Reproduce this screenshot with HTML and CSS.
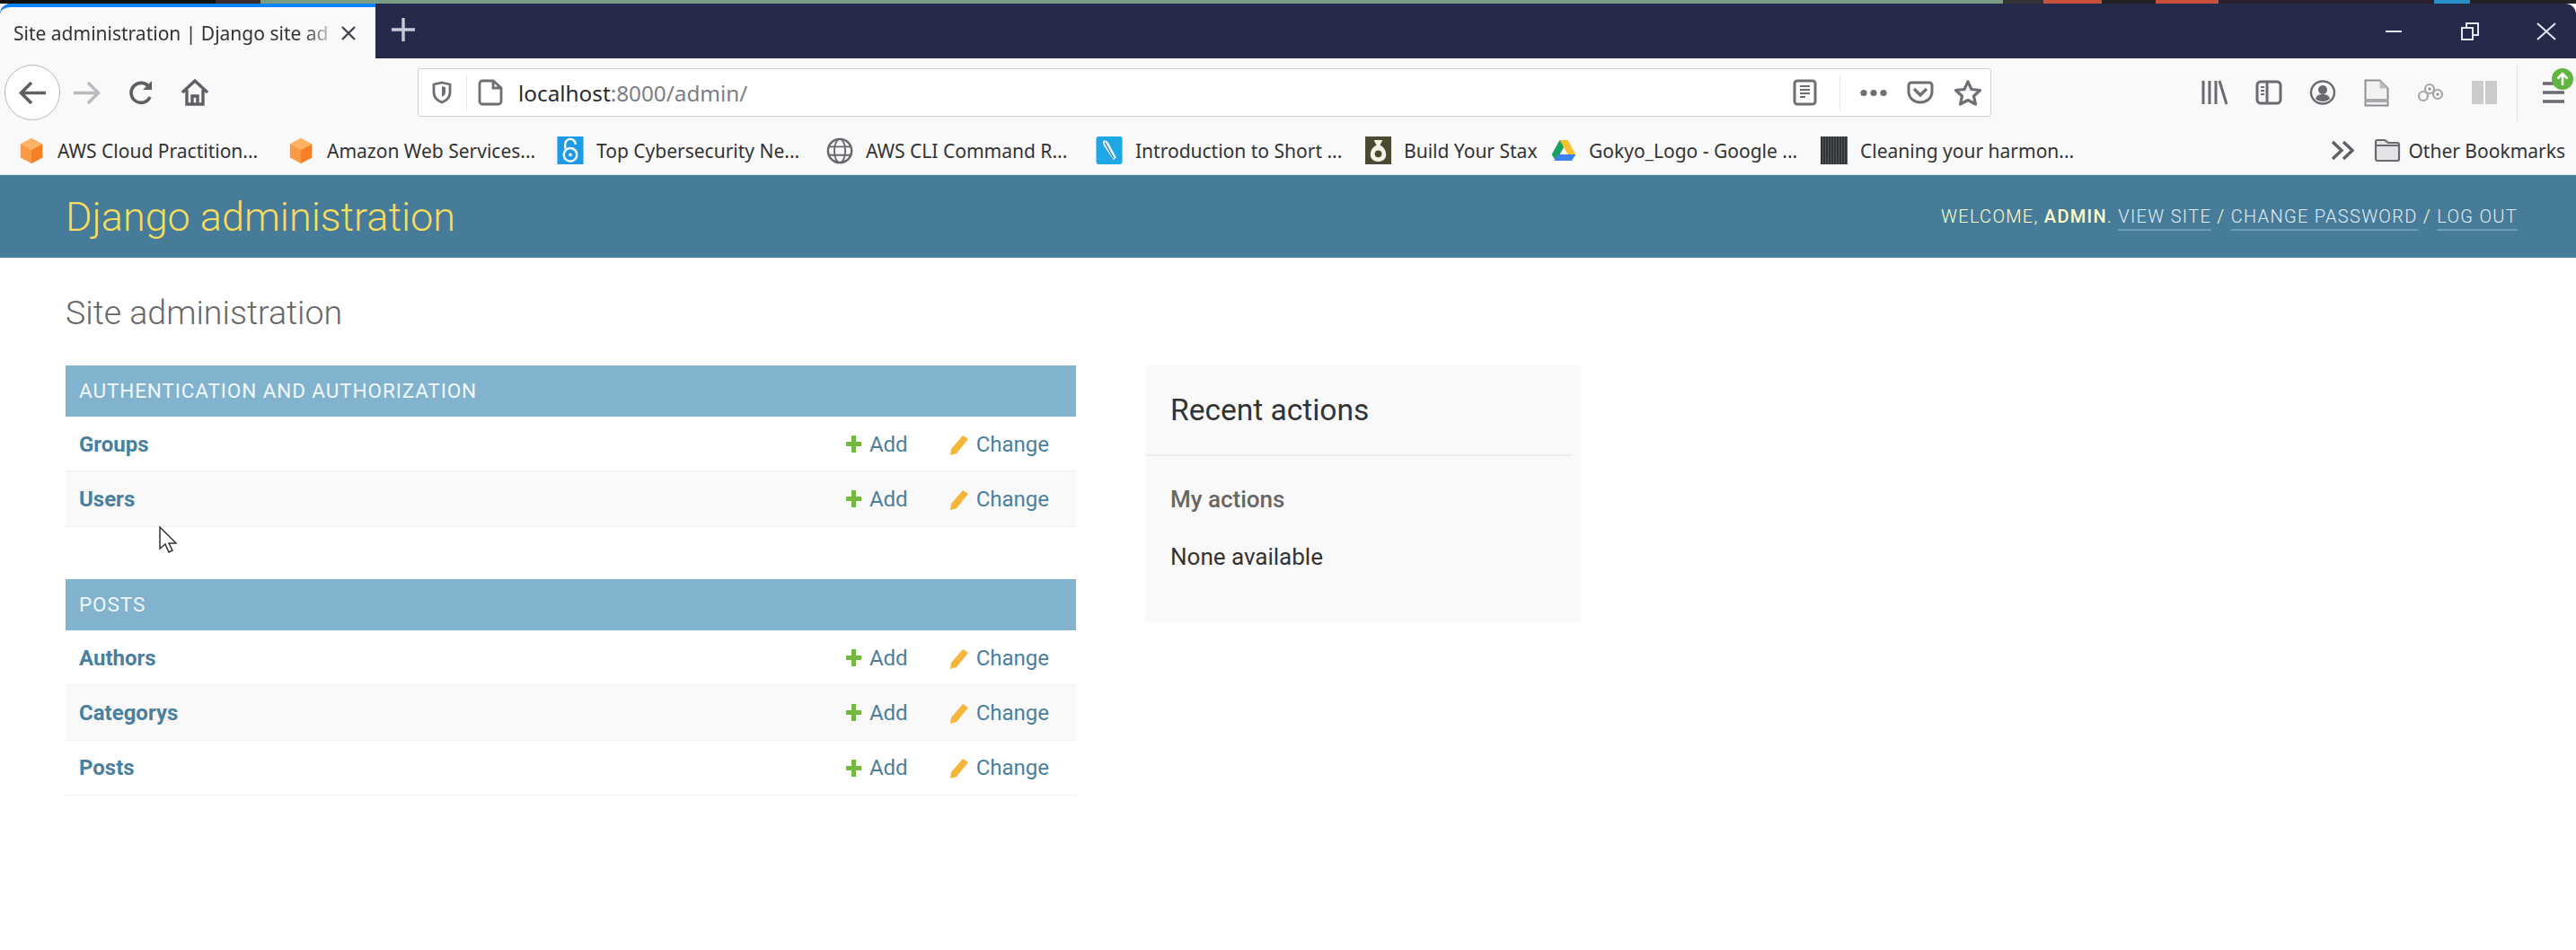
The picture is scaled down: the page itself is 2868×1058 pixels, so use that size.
FILE: index.html
```html
<!DOCTYPE html>
<html lang="en">
<head>
    <meta charset="UTF-8">
    <title>Site administration | Django site admin</title>
    <link rel="stylesheet" href="styles.css">
</head>
<body>
    <div class="desktop-strip"></div>

    <!-- browser tabs -->
    <div class="tabbar">
        <div class="tab">
            <span class="tab-title">Site administration | Django site ad</span>
            <svg class="tab-close" width="18" height="18" viewBox="0 0 18 18"><path d="M2 2l14 14M16 2L2 16" stroke="#44444c" stroke-width="2.4" fill="none"/></svg>
        </div>
        <svg class="tab-new" width="28" height="28" viewBox="0 0 28 28"><path d="M14 1v26M1 14h26" stroke="#c9cad6" stroke-width="3.4" fill="none"/></svg>
        <div class="window-controls">
            <svg width="30" height="30" viewBox="0 0 30 30"><path d="M6 15h18" stroke="#e6e7ee" stroke-width="2" fill="none"/></svg>
            <svg width="30" height="30" viewBox="0 0 30 30"><path d="M6 11h12v13H6zM11 11V6h13v13h-6" stroke="#e6e7ee" stroke-width="2" fill="none"/></svg>
            <svg width="30" height="30" viewBox="0 0 30 30"><path d="M5 6l20 18M25 6L5 24" stroke="#e6e7ee" stroke-width="2" fill="none"/></svg>
        </div>
    </div>

    <!-- navigation toolbar -->
    <div class="toolbar">
        <div class="nav-back">
            <svg width="32" height="27" viewBox="0 0 32 27"><path d="M31 13.500H4M15 2L3.500 13.500 15 25" stroke="#5f5f66" stroke-width="3.600" fill="none"/></svg>
        </div>
        <div class="nav-slot">
            <svg width="32" height="27" viewBox="0 0 32 27"><path d="M1 13.500h27M17 2l11.500 11.500L17 25" stroke="#b9b9be" stroke-width="3.400" fill="none"/></svg>
        </div>
        <div class="nav-slot">
            <svg width="30" height="28" viewBox="0 0 30 28"><path d="M25 19a11 11 0 1 1-1-11" stroke="#5f5f66" stroke-width="3.600" fill="none"/><path d="M27 1v10H17z" fill="#5f5f66"/></svg>
        </div>
        <div class="nav-slot">
            <svg width="32" height="30" viewBox="0 0 32 30"><path d="M2 15L16 2l14 13M7 12v16h18V12M13 28v-9h6v9" stroke="#5f5f66" stroke-width="3.400" fill="none"/></svg>
        </div>

        <div class="urlbar">
            <svg class="url-shield" width="22" height="26" viewBox="0 0 22 26"><path d="M11 2l9 2v9c0 6-4 9-9 11-5-2-9-5-9-11V4z" stroke="#6e6e75" stroke-width="2.800" fill="none"/><path d="M11 6l4 1v6c0 2-2 4-4 5z" fill="#6e6e75"/></svg>
            <span class="url-divider"></span>
            <svg class="url-page" width="28" height="30" viewBox="0 0 28 30"><path d="M2 5a3 3 0 0 1 3-3h12l9 8v15a3 3 0 0 1-3 3H5a3 3 0 0 1-3-3zM17 2v8h9" stroke="#6e6e75" stroke-width="2.800" fill="none"/></svg>
            <span class="url-text">localhost<span class="url-rest">:8000/admin/</span></span>
            <svg class="url-reader" width="27" height="30" viewBox="0 0 27 30"><rect x="2" y="2" width="23" height="26" rx="3" stroke="#6e6e75" stroke-width="3" fill="none"/><path d="M8 8h11M8 12h11M8 16h11M8 20h6" stroke="#6e6e75" stroke-width="2" fill="none"/></svg>
            <span class="url-divider url-divider-right"></span>
            <svg class="url-dots" width="30" height="9" viewBox="0 0 30 9"><circle cx="4" cy="4.500" r="3.600" fill="#6e6e75"/><circle cx="15" cy="4.500" r="3.600" fill="#6e6e75"/><circle cx="26" cy="4.500" r="3.600" fill="#6e6e75"/></svg>
            <svg class="url-pocket" width="30" height="26" viewBox="0 0 30 26"><path d="M2 5a3 3 0 0 1 3-3h20a3 3 0 0 1 3 3v7c0 7-6 12-13 12S2 19 2 12z" stroke="#6e6e75" stroke-width="3" fill="none"/><path d="M8 9l7 7 7-7" stroke="#6e6e75" stroke-width="3.200" fill="none"/></svg>
            <svg class="url-star" width="32" height="30" viewBox="0 0 32 30"><path d="M16 3l4 8.500 9.500 1-7 6.500 2 9-8.500-4.500L7.500 28l2-9-7-6.500 9.500-1z" stroke="#6e6e75" stroke-width="3.200" stroke-linejoin="round" fill="none"/></svg>
        </div>

        <div class="tools">
            <div class="tool-slot">
                <svg width="30" height="28" viewBox="0 0 30 28"><path d="M2 1v26M9 1v26M16 1v26M20 1l8 26" stroke="#6a6a71" stroke-width="3" fill="none"/></svg>
            </div>
            <div class="tool-slot">
                <svg width="30" height="28" viewBox="0 0 30 28"><rect x="2" y="2" width="26" height="24" rx="4" stroke="#6a6a71" stroke-width="3" fill="none"/><path d="M13 2v24" stroke="#6a6a71" stroke-width="3"/><path d="M6 8h4M6 12h4M6 16h4" stroke="#6a6a71" stroke-width="2"/></svg>
            </div>
            <div class="tool-slot">
                <svg width="30" height="28" viewBox="0 0 30 28"><ellipse cx="15" cy="14" rx="13" ry="12.500" stroke="#6a6a71" stroke-width="2.400" fill="none"/><circle cx="15" cy="11" r="5" fill="#6a6a71"/><path d="M7 21c1-4 4-5 8-5s7 1 8 5c-2 2-5 3-8 3s-6-1-8-3z" fill="#6a6a71"/></svg>
            </div>
            <div class="tool-slot">
                <svg width="28" height="31" viewBox="0 0 28 31"><path d="M1.500 1.500h16l9 9v19h-25z" fill="#f2f2f2" stroke="#8f8f95" stroke-width="2"/><path d="M17.500 1.500v9h9z" fill="#bdbdc1"/><path d="M1.500 22h25v4h-25z" fill="#a9a9ad"/></svg>
            </div>
            <div class="tool-slot">
                <svg width="30" height="22" viewBox="0 0 30 22"><circle cx="7" cy="15" r="5" stroke="#a5a5aa" stroke-width="2.200" fill="none"/><circle cx="14" cy="7" r="5" stroke="#a5a5aa" stroke-width="2.200" fill="none"/><circle cx="23" cy="13" r="5" stroke="#a5a5aa" stroke-width="2.200" fill="none"/><circle cx="14" cy="7" r="1.600" fill="#8a8a90"/><circle cx="23" cy="13" r="1.600" fill="#8a8a90"/></svg>
            </div>
            <div class="tool-slot">
                <svg width="30" height="28" viewBox="0 0 30 28"><path d="M1 1h13v26H1zM16 1h13v26H16z" fill="#cbcbcd"/></svg>
            </div>
            <span class="tool-divider"></span>
            <div class="menu-btn">
                <svg width="24" height="26" viewBox="0 0 24 26"><path d="M0 3h12M0 13h24M0 23h24" stroke="#6a6a71" stroke-width="3.600" fill="none"/></svg>
                <span class="menu-badge">
                    <svg width="14" height="16" viewBox="0 0 14 16"><path d="M7 15V2M1.500 7.500L7 2l5.500 5.500" stroke="#fff" stroke-width="2.600" fill="none"/></svg>
                </span>
            </div>
        </div>
    </div>

    <!-- bookmarks -->
    <div class="bookmarks">
        <a class="bm">
            <svg class="bm-icon" width="30" height="30" viewBox="0 0 30 32"><path d="M15 1l13 7v16l-13 7-13-7V8z" fill="#fb9a45"/><path d="M15 15v16l13-7V8z" fill="#f97f26"/><path d="M15 1l13 7-13 7-13-7z" fill="#fdb364"/></svg>
            <span>AWS Cloud Practition...</span>
        </a>
        <a class="bm">
            <svg class="bm-icon" width="30" height="30" viewBox="0 0 30 32"><path d="M15 1l13 7v16l-13 7-13-7V8z" fill="#fb9a45"/><path d="M15 15v16l13-7V8z" fill="#f97f26"/><path d="M15 1l13 7-13 7-13-7z" fill="#fdb364"/></svg>
            <span>Amazon Web Services...</span>
        </a>
        <a class="bm">
            <svg class="bm-icon" width="30" height="31" viewBox="0 0 30 32"><rect width="30" height="32" fill="#1d9be6"/><path d="M9 14V9a6 6 0 0 1 12 0" stroke="#fff" stroke-width="2.500" fill="none"/><circle cx="15" cy="21" r="7.500" stroke="#fff" stroke-width="2.500" fill="none"/><circle cx="15" cy="21" r="2" fill="#fff"/></svg>
            <span>Top Cybersecurity Ne...</span>
        </a>
        <a class="bm">
            <svg class="bm-icon" width="30" height="30" viewBox="0 0 32 32"><circle cx="16" cy="16" r="14" stroke="#66666d" stroke-width="2.600" fill="none"/><ellipse cx="16" cy="16" rx="6.500" ry="14" stroke="#66666d" stroke-width="2" fill="none"/><path d="M3 11h26M3 21h26" stroke="#66666d" stroke-width="2"/></svg>
            <span>AWS CLI Command R...</span>
        </a>
        <a class="bm">
            <svg class="bm-icon" width="30" height="31" viewBox="0 0 30 32"><rect width="30" height="32" rx="3" fill="#1ea7e4"/><path d="M8 5c3-1 6 1 7 4l8 15-3 3-9-13C9 11 7 8 8 5z" fill="#e8f5fb"/><path d="M10 7l10 18" stroke="#1878a8" stroke-width="1.200"/></svg>
            <span>Introduction to Short ...</span>
        </a>
        <a class="bm bm-short">
            <svg class="bm-icon" width="29" height="31" viewBox="0 0 30 32"><rect width="30" height="32" fill="#4a4a33"/><path d="M10 4h10l-3 6c5 2 7 7 7 11 0 5-4 8-9 8s-9-3-9-8c0-4 2-9 7-11z" fill="#f4f2e4"/><circle cx="15" cy="20" r="4" fill="#4a4a33"/></svg>
            <span>Build Your Stax</span>
        </a>
        <a class="bm">
            <svg class="bm-icon" width="28" height="25" viewBox="0 0 30 28"><path d="M10 1h10l-5 9-5 9-5 8-5-8z" fill="#18a15f"/><path d="M10 1h10l10 18H20z" fill="#fbc02d"/><path d="M8 19h22l-5 8H3z" fill="#3b82f0"/></svg>
            <span>Gokyo_Logo - Google ...</span>
        </a>
        <a class="bm bm-last">
            <span class="bm-thumb"></span>
            <span>Cleaning your harmon...</span>
        </a>
        <div class="bm-end">
            <svg width="26" height="23" viewBox="0 0 26 23"><path d="M2 2l10 9.500L2 21M14 2l10 9.500L14 21" stroke="#5f5f66" stroke-width="3.400" fill="none"/></svg>
            <svg class="bm-folder" width="30" height="27" viewBox="0 0 30 27"><path d="M2 4a2 2 0 0 1 2-2h8l4 3h10a2 2 0 0 1 2 2v16a2 2 0 0 1-2 2H4a2 2 0 0 1-2-2z" fill="#e4e4e6" stroke="#6a6a71" stroke-width="2.200"/><path d="M2 8h26" stroke="#6a6a71" stroke-width="2"/></svg>
            <span>Other Bookmarks</span>
        </div>
    </div>

    <!-- django admin page -->
    <header class="admin-header">
        <div class="branding">Django administration</div>
        <div class="user-tools">
            Welcome, <strong>admin</strong>. <a>View site</a> / <a>Change password</a> / <a>Log out</a>
        </div>
    </header>

    <main class="content">
        <h1 class="page-title">Site administration</h1>
        <div class="columns">
            <div class="app-list">
                <section class="module">
                    <h2 class="caption">Authentication and Authorization</h2>
                    <div class="row">
                        <a class="model">Groups</a>
                        <a class="act act-add"><svg width="19" height="21" viewBox="0 0 19 21"><path d="M9.500 1v19M1 10.500h17" stroke="#74b93f" stroke-width="5" fill="none"/></svg>Add</a>
                        <a class="act act-change"><svg width="22" height="24" viewBox="0 0 22 24"><path d="M15 2l6 4L8 22l-7 2 1-7z" fill="#f4b53a"/></svg>Change</a>
                    </div>
                    <div class="row row-alt">
                        <a class="model">Users</a>
                        <a class="act act-add"><svg width="19" height="21" viewBox="0 0 19 21"><path d="M9.500 1v19M1 10.500h17" stroke="#74b93f" stroke-width="5" fill="none"/></svg>Add</a>
                        <a class="act act-change"><svg width="22" height="24" viewBox="0 0 22 24"><path d="M15 2l6 4L8 22l-7 2 1-7z" fill="#f4b53a"/></svg>Change</a>
                    </div>
                </section>
                <section class="module">
                    <h2 class="caption">Posts</h2>
                    <div class="row">
                        <a class="model">Authors</a>
                        <a class="act act-add"><svg width="19" height="21" viewBox="0 0 19 21"><path d="M9.500 1v19M1 10.500h17" stroke="#74b93f" stroke-width="5" fill="none"/></svg>Add</a>
                        <a class="act act-change"><svg width="22" height="24" viewBox="0 0 22 24"><path d="M15 2l6 4L8 22l-7 2 1-7z" fill="#f4b53a"/></svg>Change</a>
                    </div>
                    <div class="row row-alt">
                        <a class="model">Categorys</a>
                        <a class="act act-add"><svg width="19" height="21" viewBox="0 0 19 21"><path d="M9.500 1v19M1 10.500h17" stroke="#74b93f" stroke-width="5" fill="none"/></svg>Add</a>
                        <a class="act act-change"><svg width="22" height="24" viewBox="0 0 22 24"><path d="M15 2l6 4L8 22l-7 2 1-7z" fill="#f4b53a"/></svg>Change</a>
                    </div>
                    <div class="row">
                        <a class="model">Posts</a>
                        <a class="act act-add"><svg width="19" height="21" viewBox="0 0 19 21"><path d="M9.500 1v19M1 10.500h17" stroke="#74b93f" stroke-width="5" fill="none"/></svg>Add</a>
                        <a class="act act-change"><svg width="22" height="24" viewBox="0 0 22 24"><path d="M15 2l6 4L8 22l-7 2 1-7z" fill="#f4b53a"/></svg>Change</a>
                    </div>
                </section>
            </div>

            <aside class="recent">
                <h2 class="recent-title">Recent actions</h2>
                <h3 class="recent-sub">My actions</h3>
                <p class="recent-none">None available</p>
            </aside>
        </div>
    </main>

    <!-- mouse pointer caught in the capture -->
    <svg class="cursor" width="20" height="30" viewBox="0 0 20 30"><path d="M1 1v24l6-5 4 9 4-2-4-8h8z" fill="#fff" stroke="#333" stroke-width="1.500"/></svg>
</body>
</html>
```

FILE: styles.css
```css
html, body {
    margin: 0;
    height: 1058px;
    overflow: hidden;
    background: #fff;
}

body {
    position: relative;
    font-family: Roboto, "Liberation Sans", sans-serif;
    color: #333;
}

.desktop-strip {
    height: 4px;
    background: linear-gradient(90deg, #111 0, #111 240px, #3a2a30 240px, #3a2a30 290px, #7a9e85 290px, #7a9e85 2230px, #333 2230px, #333 2275px, #c9503a 2275px, #c9503a 2340px, #222 2340px, #222 2400px, #c9503a 2400px, #c9503a 2470px, #2a2030 2470px, #2a2030 2710px, #2890c8 2710px, #2890c8 2750px, #222 2750px);
}

/* browser chrome */
.tabbar {
    height: 61px;
    display: flex;
    align-items: center;
    background: #252a4b;
    border-radius: 12px 12px 0 0;
}

.tab {
    width: 418px;
    height: 61px;
    box-sizing: border-box;
    display: flex;
    align-items: center;
    padding: 0 21px 0 15px;
    background: #f9f9fa;
    border-top: 4px solid #0a84ff;
    border-radius: 12px 0 0 0;
    font-family: "Noto Sans", sans-serif;
    font-size: 21px;
    color: #333;
}

.tab-title {
    flex: 1;
    white-space: nowrap;
    -webkit-mask-image: linear-gradient(90deg, #000 92%, rgba(0, 0, 0, 0.25) 100%);
    mask-image: linear-gradient(90deg, #000 92%, rgba(0, 0, 0, 0.25) 100%);
}

.tab-close {
    margin-left: 12px;
}

.tab-new {
    margin-left: 17px;
    margin-top: -4px;
}

.window-controls {
    margin-left: auto;
    padding-right: 18px;
    display: flex;
    gap: 55px;
}

.toolbar {
    height: 76px;
    box-sizing: border-box;
    display: flex;
    align-items: center;
    padding-left: 5px;
    background: #f9f9fa;
}

.nav-back {
    width: 62px;
    height: 62px;
    box-sizing: border-box;
    display: flex;
    align-items: center;
    justify-content: center;
    background: #fff;
    border: 1px solid #b8b8bc;
    border-radius: 50%;
    flex: none;
}

.nav-slot {
    width: 60px;
    display: flex;
    justify-content: center;
    flex: none;
}

.urlbar {
    width: 1752px;
    height: 54px;
    box-sizing: border-box;
    margin-left: 218px;
    flex: none;
    display: flex;
    align-items: center;
    background: #fff;
    border: 1px solid #cfcfd2;
    border-radius: 3px;
}

.url-shield {
    margin-left: 15px;
}

.url-divider {
    width: 1px;
    height: 40px;
    margin-left: 16px;
    background: #e6e6e8;
}

.url-page {
    margin-left: 12px;
}

.url-text {
    margin-left: 17px;
    font-family: "Noto Sans", sans-serif;
    font-size: 24.300px;
    color: #2a2a2e;
}

.url-rest {
    color: #7d7d84;
}

.url-reader {
    margin-left: auto;
}

.url-divider-right {
    margin-left: 25px;
}

.url-dots {
    margin-left: 22px;
}

.url-pocket {
    margin-left: 22px;
}

.url-star {
    margin-left: 22px;
    margin-right: 9px;
}

.tools {
    flex: 1;
    display: flex;
    align-items: center;
    padding-left: 219px;
}

.tool-slot {
    width: 60px;
    display: flex;
    justify-content: center;
    flex: none;
}

.tool-divider {
    width: 1px;
    height: 64px;
    margin-left: 6px;
    background: #e2e2e4;
}

.menu-btn {
    position: relative;
    margin-left: 28px;
    display: flex;
}

.menu-badge {
    position: absolute;
    top: -14px;
    right: -10px;
    width: 24px;
    height: 24px;
    border-radius: 50%;
    background: #62b53c;
    display: flex;
    align-items: center;
    justify-content: center;
}

.bookmarks {
    height: 53px;
    display: flex;
    align-items: center;
    padding-left: 20px;
    background: #f9f9fa;
    font-family: "Noto Sans", sans-serif;
    font-size: 21px;
    color: #333;
    white-space: nowrap;
}

.bm {
    width: 300px;
    display: flex;
    align-items: center;
    flex: none;
}

.bm-short {
    width: 207px;
}

.bm-last {
    width: auto;
}

.bm-icon,
.bm-thumb {
    margin-right: 14px;
    flex: none;
}

.bm-thumb {
    width: 30px;
    height: 31px;
    background: repeating-linear-gradient(90deg, #2f3335 0, #2f3335 2px, #565b5d 2px, #565b5d 3px);
}

.bm-end {
    margin-left: auto;
    padding-right: 12px;
    display: flex;
    align-items: center;
}

.bm-folder {
    margin: 0 8px 0 22px;
}

/* admin page */
.admin-header {
    height: 93px;
    box-sizing: border-box;
    padding: 0 65px 0 73px;
    display: flex;
    align-items: center;
    justify-content: space-between;
    background: #477b9a;
    border-top: 1px solid #d8e6ee;
}

.branding {
    font-size: 45px;
    font-weight: 300;
    color: #f5dd5d;
}

.user-tools {
    font-size: 20px;
    font-weight: 300;
    letter-spacing: 1.300px;
    text-transform: uppercase;
    color: #ffc;
}

.user-tools strong {
    font-weight: 500;
}

.user-tools a {
    color: #e0eff6;
    border-bottom: 2px solid #6d9dba;
    padding-bottom: 2px;
}

.content {
    padding: 0 0 0 73px;
}

.page-title {
    margin: 0;
    height: 120px;
    line-height: 122px;
    font-size: 37.500px;
    font-weight: 300;
    color: #666;
}

.columns {
    display: flex;
    gap: 77px;
    align-items: flex-start;
}

.app-list {
    width: 1125px;
}

.module {
    margin-bottom: 58.340px;
}

.caption {
    margin: 0;
    height: 57px;
    padding-left: 15px;
    line-height: 57px;
    background: #81b3ce;
    font-size: 22.500px;
    font-weight: 400;
    letter-spacing: 0.900px;
    text-transform: uppercase;
    color: #f2f8fb;
}

.row {
    height: 61.330px;
    box-sizing: border-box;
    display: flex;
    align-items: center;
    padding: 1px 30px 0 15px;
    border-bottom: 1px solid #f1f1f1;
    font-size: 24px;
    color: #4a7f9e;
}

.row-alt {
    background: #f9f9f9;
}

.model {
    flex: 1;
    font-weight: 700;
}

.act {
    display: flex;
    align-items: center;
    gap: 8px;
}

.act-change {
    margin-left: 46px;
}

.recent {
    width: 485px;
    height: 286px;
    box-sizing: border-box;
    padding: 0 12px 0 19px;
    background: #f9f9f9;
}

.recent-title {
    margin: 0 -2px 0 -19px;
    height: 101px;
    box-sizing: border-box;
    padding: 30px 0 0 28px;
    border-bottom: 2px solid #eee;
    font-size: 33.500px;
    font-weight: 400;
    line-height: 40px;
    color: #333;
}

.recent-sub {
    margin: 32px 0 0 9px;
    font-size: 26px;
    font-weight: 500;
    line-height: 32px;
    color: #666;
}

.recent-none {
    margin: 32px 0 0 9px;
    font-size: 26px;
    line-height: 32px;
    color: #333;
}

.cursor {
    position: absolute;
    left: 177px;
    top: 586px;
}
```
